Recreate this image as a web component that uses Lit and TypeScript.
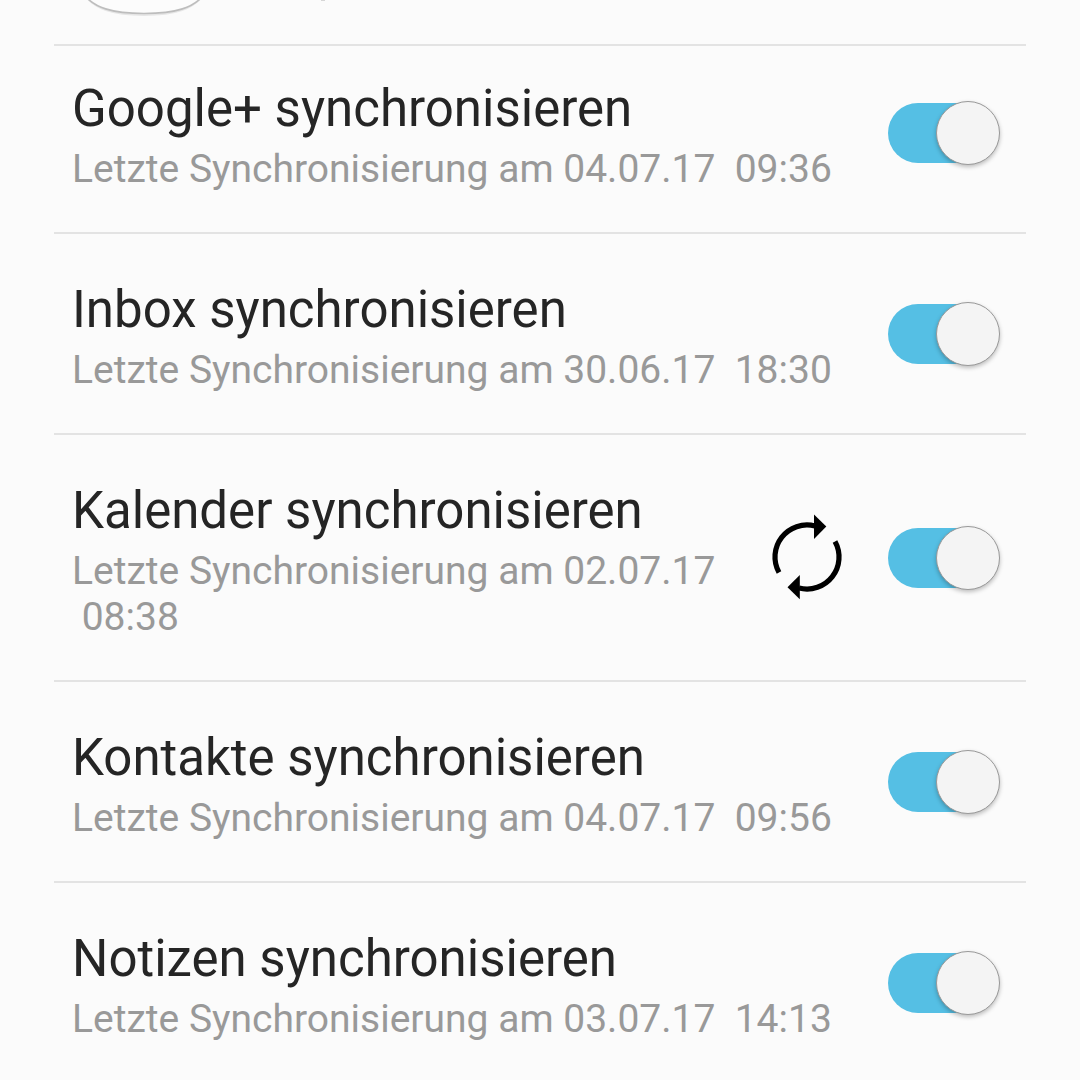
import { LitElement, html, css, nothing } from "lit";
import { customElement, state } from "lit/decorators.js";

interface SyncEntry {
  id: string;
  name: string;
  date: string;
  time: string;
  enabled: boolean;
  syncing?: boolean;
}

@customElement("sync-icon")
class SyncIcon extends LitElement {
  static styles = css`
    :host {
      display: block;
      flex: none;
    }
    .icon {
      display: block;
      width: 72px;
      height: 88px;
    }
    .arc {
      fill: none;
      stroke: #000;
      stroke-width: 5.2;
    }
  `;

  render() {
    return html`
      <svg class="icon" viewBox="771 514 72 88" role="img" aria-label="Synchronisierung läuft">
        <path class="arc" d="M815 526A32 32 0 0 0 779 572.5" />
        <path class="arc" d="M799 588A32 32 0 0 0 835 541.5" />
        <path d="M814 514.5L826.3 526.5L814 539Z" />
        <path d="M799.8 575L787.5 587.3L799.8 599.3Z" />
      </svg>
    `;
  }
}

@customElement("app-root")
class AppRoot extends LitElement {
  static styles = css`
    :host {
      display: block;
      min-height: 100vh;
      background: #fbfbfb;
      color: #252525;
      font-family: Roboto, "Noto Sans", sans-serif;
    }
    .page {
      padding: 0 54px;
    }
    .previous {
      display: flex;
      align-items: flex-start;
      height: 44px;
      padding-left: 30px;
      gap: 117px;
      overflow: hidden;
    }
    .app-icon {
      flex: none;
      width: 120px;
      height: 20px;
    }
    .speck {
      width: 4px;
      height: 1px;
      background: #d6d6d6;
    }
    .list {
      margin: 0;
      padding: 0;
      list-style: none;
    }
    .row {
      display: flex;
      align-items: center;
      padding: 40px 26px 40px 18px;
      border-top: 2px solid #e3e3e3;
    }
    .row:first-child {
      padding-top: 27px;
    }
    .text {
      flex: 1;
      min-width: 0;
      cursor: pointer;
    }
    .name,
    .detail {
      display: block;
    }
    .name {
      margin-bottom: 2px;
      font-size: 51px;
      line-height: 71px;
    }
    .detail {
      font-size: 39px;
      line-height: 46px;
      color: #999;
    }
    sync-icon {
      margin: 0 45px;
    }
    .switch {
      appearance: none;
      display: grid;
      flex: none;
      align-items: center;
      width: 112px;
      height: 64px;
      margin: 0;
      cursor: pointer;
    }
    .switch::before,
    .switch::after {
      content: "";
      grid-area: 1 / 1;
      box-sizing: border-box;
    }
    .switch::before {
      width: 108px;
      height: 60px;
      border-radius: 30px;
      background: #c4c4c4;
    }
    .switch:checked::before {
      background: #55bfe4;
    }
    .switch::after {
      width: 64px;
      height: 64px;
      border: 1px solid #999;
      border-radius: 50%;
      background: #f4f4f4;
      box-shadow: 0 2px 4px rgba(0, 0, 0, 0.25);
    }
    .switch:checked::after {
      justify-self: end;
    }
  `;

  @state()
  private entries: SyncEntry[] = [
    { id: "google-plus", name: "Google+", date: "04.07.17", time: "09:36", enabled: true },
    { id: "inbox", name: "Inbox", date: "30.06.17", time: "18:30", enabled: true },
    { id: "kalender", name: "Kalender", date: "02.07.17", time: "08:38", enabled: true, syncing: true },
    { id: "kontakte", name: "Kontakte", date: "04.07.17", time: "09:56", enabled: true },
    { id: "notizen", name: "Notizen", date: "03.07.17", time: "14:13", enabled: true },
  ];

  private toggle(id: string) {
    this.entries = this.entries.map((e) => (e.id === id ? { ...e, enabled: !e.enabled } : e));
  }

  private renderRow(e: SyncEntry) {
    return html`
      <li class="row">
        <label class="text" for=${e.id}>
          <span class="name">${e.name} synchronisieren</span>
          <span class="detail">Letzte Synchronisierung am ${e.date} &nbsp;${e.time}</span>
        </label>
        ${e.syncing ? html`<sync-icon></sync-icon>` : nothing}
        <input
          class="switch"
          type="checkbox"
          role="switch"
          id=${e.id}
          .checked=${e.enabled}
          @change=${() => this.toggle(e.id)}
        />
      </li>
    `;
  }

  render() {
    return html`
      <main class="page">
        <div class="previous" aria-hidden="true">
          <svg class="app-icon" viewBox="0 0 120 20">
            <path d="M0 -6C10 9 29 15 60 15S110 9 120 -6" fill="none" stroke="#e6e6e6" stroke-width="2" />
            <path d="M-1 -7C9 8 29 13.5 60 13.5S111 8 121 -7" fill="#fcfcfc" stroke="#bdbdbd" stroke-width="1.6" />
          </svg>
          <span class="speck"></span>
        </div>
        <ul class="list">
          ${this.entries.map((e) => this.renderRow(e))}
        </ul>
      </main>
    `;
  }
}
